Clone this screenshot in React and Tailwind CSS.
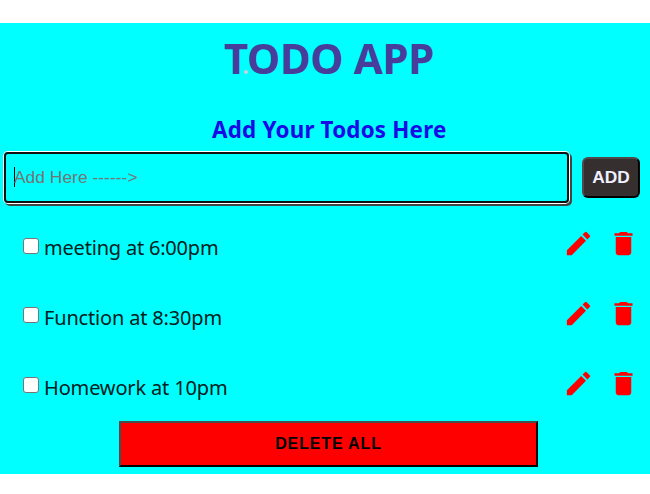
import { MdEdit, MdDelete } from "react-icons/md";

const todos = [
  { text: "meeting at 6:00pm", row: "h-[70px]", box: "mt-[15px]", width: "tracking-[-0.2px]" },
  { text: "Function at 8:30pm", row: "h-[70px]", box: "mt-[14px]", width: "tracking-[-0.17px]" },
  { text: "Homework at 10pm", row: "h-[58px]", box: "mt-[14px]", width: "tracking-[-0.16px]" },
];

export default function App() {
  return (
    <div className="h-[494px] w-[650px] overflow-hidden bg-white pt-[23px] font-['Noto_Sans',sans-serif]">
      <main className="h-[451px] bg-[#00ffff]">
        <h1 className="relative ml-[224px] h-[72px] w-max pt-[5px] text-[42px] leading-[60px] font-bold tracking-[-0.35px] whitespace-nowrap text-[#483d9b]">
          TODO APP
          <span className="absolute top-[47px] left-[20px] size-1 rounded-full bg-[#cbd0e0]" />
        </h1>
        <h2 className="ml-[212px] h-[57px] w-max pt-[20px] text-[22.4px] leading-[30px] font-bold tracking-[0.19px] whitespace-nowrap text-[#1a0be6]">
          Add Your Todos Here
        </h2>
        <div className="flex font-['Liberation_Sans',sans-serif]">
          <div className="ml-[4px] flex h-[51px] w-[565px] items-center rounded-[4px] border-2 border-[#101010] pb-[2px] pl-[8px] shadow-[0_0_0_1px_white,2px_2px_0_1px_#444444]">
            <span className="h-5 w-px bg-black" />
            <span className="-ml-px text-[17.33px] leading-5 tracking-[0.05px] whitespace-nowrap text-[#757575]">Add Here ------&gt;</span>
          </div>
          <button className="mt-[5px] ml-[13px] h-[41px] w-[58px] rounded-[6px] border-2 border-t-[#504b4b] border-r-black border-b-black border-l-[#504b4b] bg-[#362f2f] pb-[2px] text-[17.33px] leading-5 font-bold text-[#f0f0ff]">
            ADD
          </button>
        </div>
        <ul className="pt-5">
          {todos.map((todo) => (
            <li key={todo.text} className={`flex items-start ${todo.row}`}>
              <input
                type="checkbox"
                className={`ml-[23px] size-4 shrink-0 appearance-none rounded-[3px] border border-[#767676] bg-white ${todo.box}`}
              />
              <span className={`ml-[5px] flex-1 pt-[10px] text-[20px] leading-[30px] whitespace-nowrap text-[#002020] ${todo.width}`}>
                {todo.text}
              </span>
              <MdEdit className="mt-[5px] size-[31px] text-[#ff0000]" />
              <MdDelete className="mt-[5px] mr-[11px] ml-[14px] size-[31px] text-[#ff0000]" />
            </li>
          ))}
        </ul>
        <button className="ml-[119px] block h-[46px] w-[419px] border-2 border-t-[#4c4c4c] border-r-black border-b-black border-l-[#4c4c4c] bg-[#ff0000] font-['Liberation_Sans',sans-serif] text-[16px] leading-5 font-bold tracking-[0.85px] text-black">
          DELETE ALL
        </button>
      </main>
    </div>
  );
}
